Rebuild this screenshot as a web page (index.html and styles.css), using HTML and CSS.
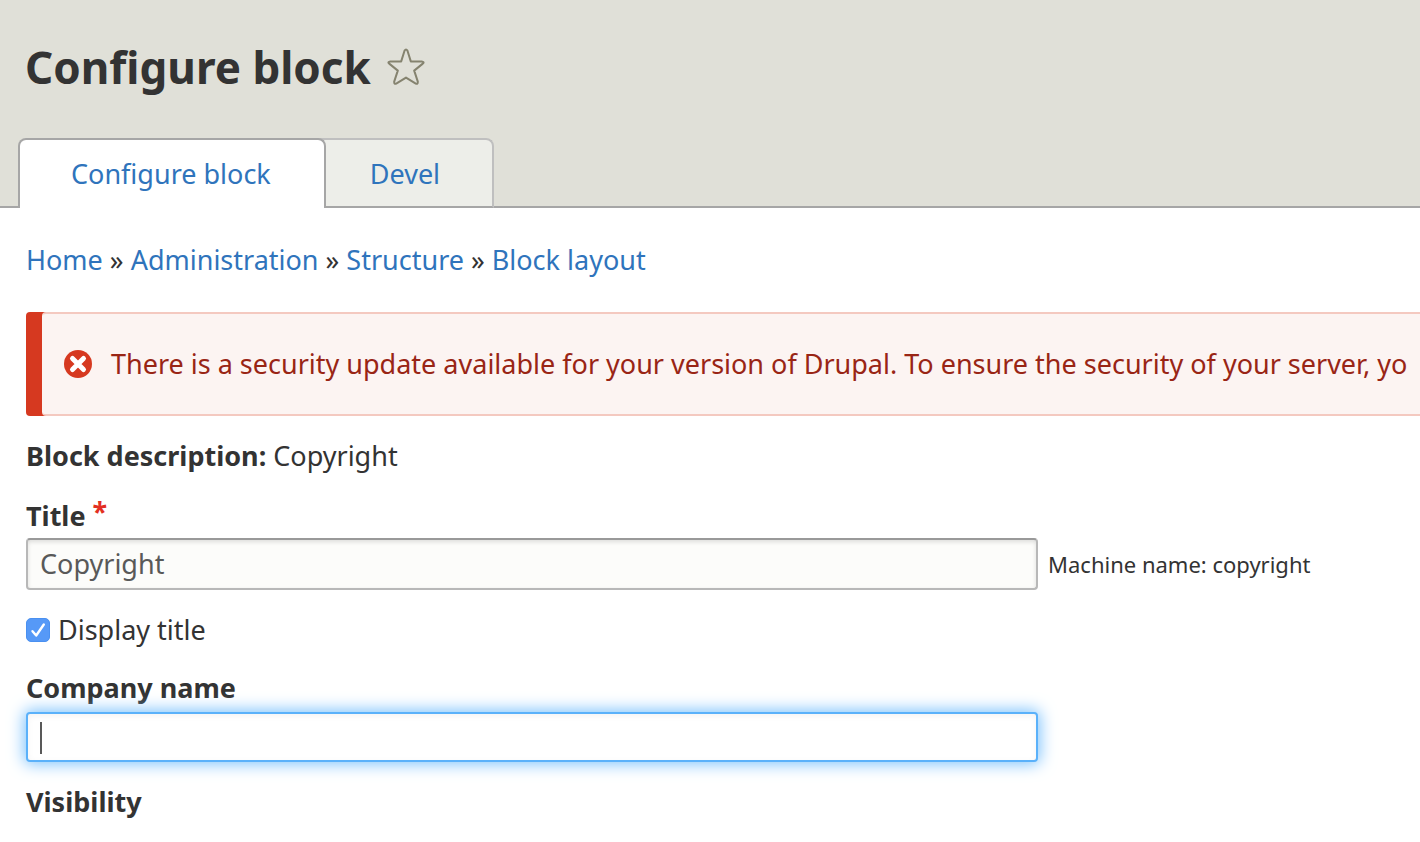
FILE: index.html
```html
<!DOCTYPE html>
<html lang="en">
<head>
<meta charset="utf-8">
<meta name="viewport" content="width=device-width, initial-scale=1">
<title>Configure block</title>
<link rel="stylesheet" href="styles.css">
</head>
<body>
<header class="header">
  <div class="title-row">
    <h1 class="title">Configure block</h1>
    <button class="star" type="button" aria-label="Add to shortcuts">
      <svg width="38" height="38" viewBox="0 0 38 38" fill="none" stroke="#85836f" stroke-width="2" stroke-linejoin="round" aria-hidden="true"><path d="M17.6 2.5Q19 .3 20.4 2.5L23.8 13.4H34.6Q37.8 13.8 35.8 15.6L27.2 22.6 30.8 33.6Q31 36.8 28.4 35.4L19 29.6 9.6 35.4Q7 36.8 7.2 33.6L10.8 22.6 2.2 15.6Q.2 13.8 3.4 13.4H14.2Z"/></svg>
    </button>
  </div>
  <nav class="tabs" aria-label="Tabs">
    <a class="tab tab-active" href="#" aria-current="page">Configure block</a>
    <a class="tab" href="#">Devel</a>
  </nav>
</header>
<main class="main">
  <nav class="breadcrumb" aria-label="Breadcrumb"><a href="#">Home</a> » <a href="#">Administration</a> » <a href="#">Structure</a> » <a href="#">Block layout</a></nav>
  <div class="message" role="alert">
    <svg class="message-icon" width="28" height="28" viewBox="0 0 28 28" aria-hidden="true"><circle cx="14" cy="14" r="14" fill="#d63920"/><path d="M8.5 8.5l11 11M19.5 8.5l-11 11" stroke="#fff" stroke-width="5" stroke-linecap="round"/></svg>
    <p class="message-text">There is a security update available for your version of Drupal. To ensure the security of your server, yo</p>
  </div>
  <form class="form">
    <p class="description"><strong>Block description:</strong> Copyright</p>
    <div class="field">
      <label class="label" for="title">Title <span class="required">*</span></label>
      <div class="field-row">
        <input class="text" id="title" type="text" value="Copyright" required>
        <span class="machine">Machine name: copyright</span>
      </div>
    </div>
    <div class="check-row">
      <input class="check" id="display" type="checkbox" checked>
      <label for="display">Display title</label>
    </div>
    <div class="field company">
      <label class="label" for="company">Company name</label>
      <div class="field-row">
        <input class="text text-focus" id="company" type="text">
        <span class="caret"></span>
      </div>
    </div>
    <h2 class="label">Visibility</h2>
  </form>
</main>
</body>
</html>
```
FILE: styles.css
```css
* {
  box-sizing: border-box;
}

body {
  margin: 0;
  background: #fff;
  color: #333;
  font: 27px/32px "Noto Sans", "Open Sans", sans-serif;
  overflow-x: hidden;
}

h1, h2, p {
  margin: 0;
}

a {
  color: #2f74bc;
  text-decoration: none;
}

.header {
  background: #e0e0d8;
  padding-top: 38px;
}

.title-row {
  display: flex;
  align-items: center;
  gap: 16px;
  padding-left: 25px;
}

.title {
  font-size: 44px;
  line-height: 58px;
}

.star {
  display: flex;
  padding: 0;
  border: 0;
  background: none;
}

.tabs {
  display: flex;
  padding-top: 42px;
}

.tabs::before {
  content: "";
  width: 18px;
  border-bottom: 2px solid #a6a6a6;
}

.tabs::after {
  content: "";
  flex: 1;
  border-bottom: 2px solid #a6a6a6;
}

.tab {
  margin-left: -8px;
  padding: 18px 52px 16px 52px;
  border: 2px solid #bfbfbf;
  border-bottom-color: #a6a6a6;
  border-left: 0;
  border-radius: 0 8px 0 0;
  background: #edeee9;
}

.tab-active {
  z-index: 1;
  margin-left: 0;
  padding: 18px 53px 18px 51px;
  border: 2px solid #a6a6a6;
  border-bottom: 0;
  border-radius: 8px 8px 0 0;
  background: #fff;
}

.main {
  padding: 36px 0 24px 26px;
}

.breadcrumb {
  margin-bottom: 36px;
}

.message {
  display: flex;
  align-items: center;
  gap: 19px;
  margin-left: 16px;
  padding: 34px 0 34px 22px;
  border: solid #f4c9c0;
  border-width: 2px 0;
  border-radius: 4px 0 0 4px;
  background: #fcf4f2;
  box-shadow: -16px 0 0 #d63920;
  color: #992515;
  overflow: hidden;
}

.message-icon {
  flex: none;
}

.message-text {
  white-space: nowrap;
}

.description {
  margin: 24px 0 28px;
}

.label {
  display: block;
  font-size: 27px;
  font-weight: 700;
  line-height: 32px;
}

.required {
  color: #e32f22;
  line-height: 16px;
  vertical-align: 4px;
}

.field-row {
  position: relative;
  display: flex;
  align-items: center;
  gap: 10px;
  margin-top: 6px;
}

.text {
  width: 72.6%;
  padding: 4px 12px;
  border: 2px solid #b8b8b8;
  border-top-color: #999;
  border-radius: 4px;
  background: #fcfcfa;
  box-shadow: inset 0 2px 4px rgba(0, 0, 0, 0.125);
  color: #595959;
  font: inherit;
  line-height: 40px;
}

.text-focus {
  padding: 3px 12px;
  border-color: #5ab1fa;
  outline: 0;
  background: #fff;
  box-shadow: 0 0 16px 2px #7cc2fc, inset 0 2px 6px rgba(0, 0, 0, 0.05);
}

.caret {
  position: absolute;
  left: 14px;
  top: 10px;
  width: 2px;
  height: 32px;
  background: #595959;
}

.machine {
  font-size: 22px;
}

.check-row {
  display: flex;
  align-items: center;
  gap: 8px;
  margin: 24px 0 26px;
}

.check {
  appearance: none;
  width: 24px;
  height: 24px;
  margin: 0;
  border: 1px solid #4a90f0;
  border-radius: 5px;
  background: #5699f7 url("data:image/svg+xml,%3Csvg xmlns='http://www.w3.org/2000/svg' viewBox='0 0 22 22' fill='none' stroke='white' stroke-width='2.4' stroke-linecap='round' stroke-linejoin='round'%3E%3Cpath d='M5.5 12.2l3.7 4.3 7.6-11'/%3E%3C/svg%3E");
}

.company {
  margin-bottom: 24px;
}

.company .field-row {
  margin-top: 8px;
}
```
